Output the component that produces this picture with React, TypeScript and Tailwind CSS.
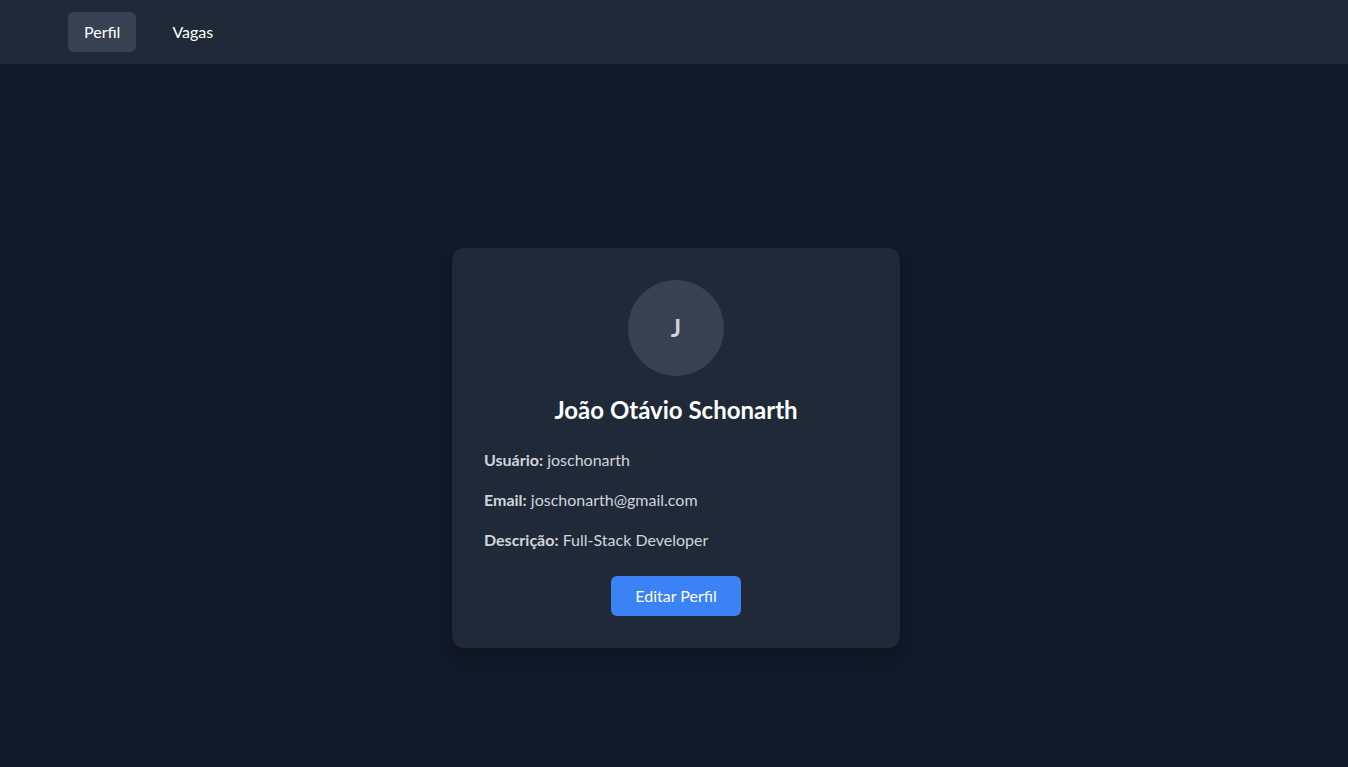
export default function App() {
  return (
    <div className="min-h-screen bg-[#111827] text-white" style={{ fontFamily: 'Lato, "Noto Sans", sans-serif' }}>
      <nav className="h-16 bg-[#1f2937] flex items-center pl-[68px] gap-5">
        <button className="px-4 py-2 rounded-md bg-[#374151] text-base text-white">Perfil</button>
        <button className="px-4 py-2 rounded-md text-base text-white">Vagas</button>
      </nav>
      <main className="h-[703px] flex justify-center pt-[184px] pl-1">
        <div className="w-[448px] h-[400px] bg-[#1f2937] rounded-xl shadow-lg p-8 flex flex-col">
          <div className="w-24 h-24 rounded-full bg-[#374151] mx-auto flex items-center justify-center text-2xl font-bold text-[#d1d5db]">
            J
          </div>
          <h1 className="mt-[18px] mb-[22px] text-2xl font-bold text-center leading-8">João Otávio Schonarth</h1>
          <div className="flex flex-col gap-4 text-base text-[#d1d5db]">
            <p><strong className="font-bold">Usuário:</strong> joschonarth</p>
            <p><strong className="font-bold">Email:</strong> joschonarth@gmail.com</p>
            <p><strong className="font-bold">Descrição:</strong> Full-Stack Developer</p>
          </div>
          <button className="mt-6 mx-auto h-10 px-6 rounded-md bg-[#3b82f6] text-white text-base">Editar Perfil</button>
        </div>
      </main>
    </div>
  );
}
